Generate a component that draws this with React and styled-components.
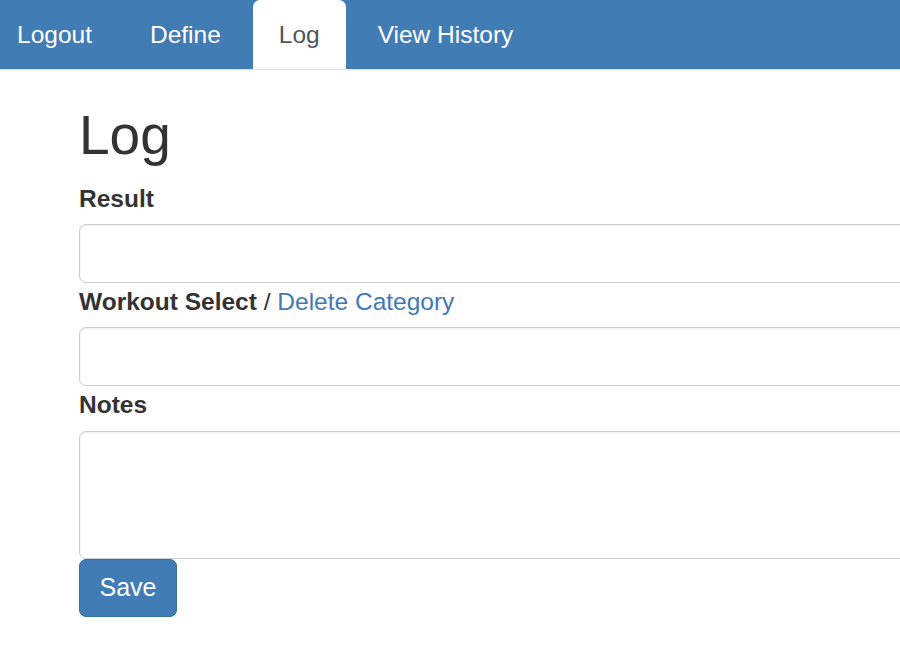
import React from 'react';
import styled, { createGlobalStyle } from 'styled-components';

const GlobalStyle = createGlobalStyle`
  html, body {
    margin: 0;
    padding: 0;
    background: #fff;
    overflow: hidden;
  }
  body {
    font-family: "Liberation Sans", Arial, Helvetica, sans-serif;
    color: #333;
  }
`;

const NavBar = styled.nav`
  height: 70px;
  background-color: #417cb5;
  border-bottom: 1px solid #e3e3e3;
  box-sizing: border-box;
`;

const TabList = styled.ul`
  display: flex;
  gap: 6px;
  height: 100%;
  margin: 0;
  padding: 0;
  list-style: none;
`;

const Tab = styled.li`
  display: flex;
  align-items: center;
  height: 100%;
  box-sizing: border-box;
  padding: 0 26px;
  font-size: 24.5px;
  color: ${({ active }) => (active ? '#555' : '#fff')};
  background-color: ${({ active }) => (active ? '#fff' : 'transparent')};
  border-radius: 7px 7px 0 0;
  cursor: pointer;

  &:first-child {
    padding-left: 17px;
  }
`;

const Content = styled.main`
  padding: 35px 0 0 79px;
`;

const Heading = styled.h1`
  margin: 0 0 16px;
  font-size: 55px;
  font-weight: 500;
  line-height: 1.1;
  color: #333;
`;

const Label = styled.label`
  display: block;
  margin-bottom: ${({ gap }) => gap || 8}px;
  font-size: 24.5px;
  font-weight: bold;
  line-height: 34px;
  color: #333;
`;

const Plain = styled.span`
  font-weight: normal;
`;

const Link = styled.a`
  font-weight: normal;
  color: #3f7ab5;
  text-decoration: none;
  cursor: pointer;
`;

const Input = styled.input`
  display: block;
  box-sizing: border-box;
  width: 900px;
  height: 59px;
  margin: 0 0 2px;
  padding: 10px 20px;
  font-size: 24px;
  font-family: inherit;
  border: 1px solid #ccc;
  border-radius: 7px;
  box-shadow: inset 0 1px 2px rgba(0, 0, 0, 0.075);
  outline: none;
`;

const TextArea = styled.textarea`
  display: block;
  box-sizing: border-box;
  width: 900px;
  height: 128px;
  margin: 0;
  padding: 10px 20px;
  font-size: 24px;
  font-family: inherit;
  border: 1px solid #ccc;
  border-radius: 7px;
  box-shadow: inset 0 1px 2px rgba(0, 0, 0, 0.075);
  resize: none;
  outline: none;
`;

const SaveButton = styled.button`
  display: block;
  box-sizing: border-box;
  width: 98px;
  height: 58px;
  padding: 0;
  font-size: 25px;
  font-family: inherit;
  color: #fff;
  background-color: #417cb5;
  border: 1px solid #3a70a6;
  border-radius: 7px;
  cursor: pointer;
`;

const tabs = ['Logout', 'Define', 'Log', 'View History'];

export default function App() {
  return (
    <>
      <GlobalStyle />
      <NavBar>
        <TabList>
          {tabs.map((t) => (
            <Tab key={t} active={t === 'Log'}>
              {t}
            </Tab>
          ))}
        </TabList>
      </NavBar>
      <Content>
        <Heading>Log</Heading>
        <Label>Result</Label>
        <Input type="text" />
        <Label>
          Workout Select <Plain>/</Plain> <Link>Delete Category</Link>
        </Label>
        <Input type="text" />
        <Label gap={9}>Notes</Label>
        <TextArea />
        <SaveButton>Save</SaveButton>
      </Content>
    </>
  );
}
